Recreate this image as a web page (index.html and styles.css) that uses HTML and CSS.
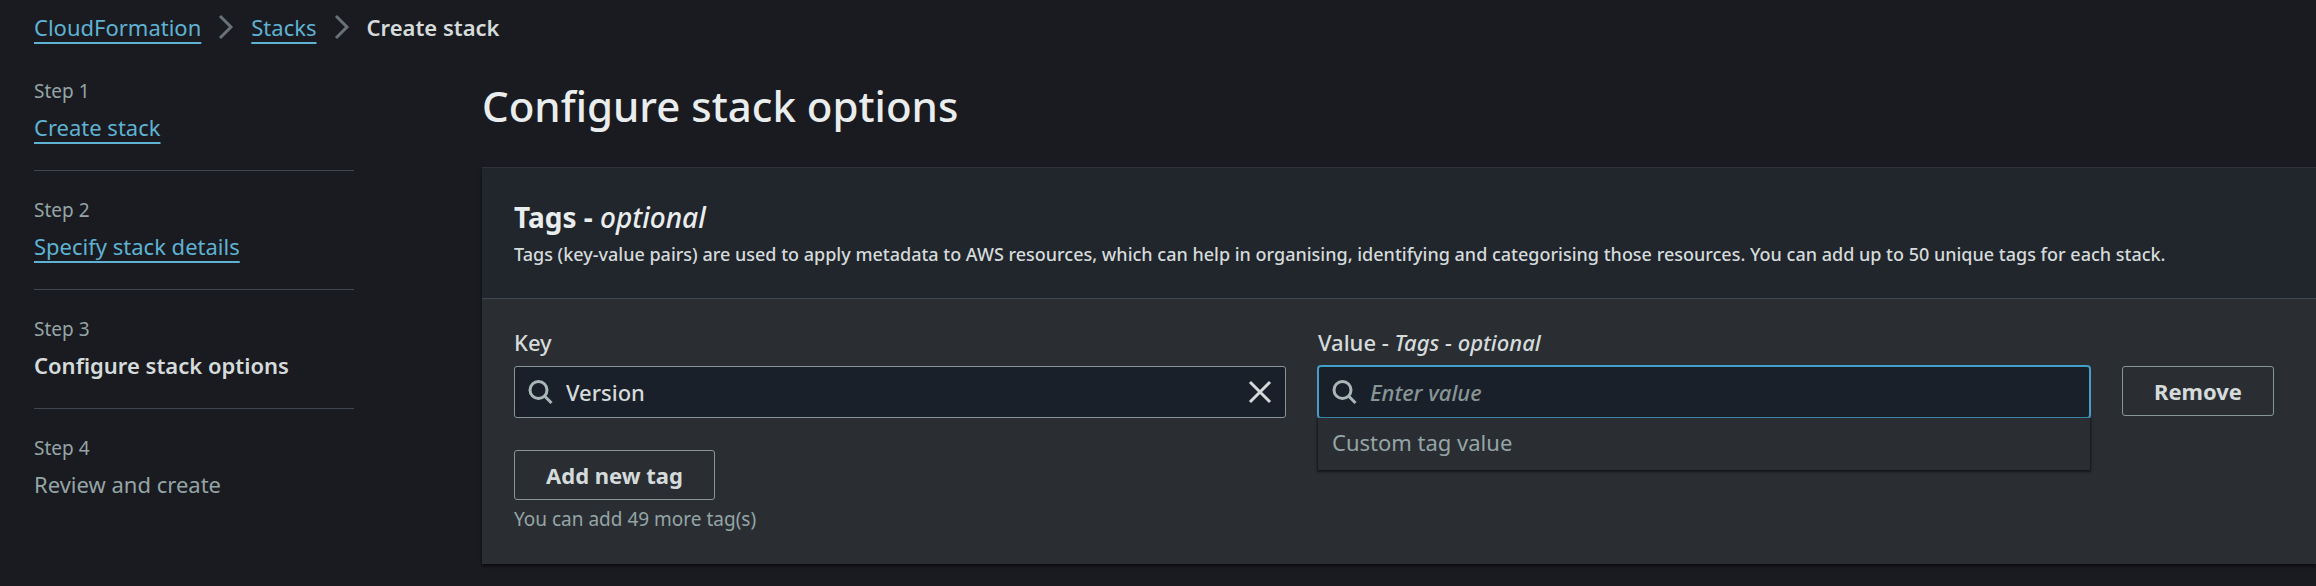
FILE: index.html
```html
<!DOCTYPE html>
<html lang="en">
<head>
<meta charset="utf-8">
<title>Create stack</title>
<link rel="stylesheet" href="styles.css">
</head>
<body>
<nav class="breadcrumbs" aria-label="Breadcrumbs">
  <ol class="crumbs">
    <li class="crumb"><a class="link" href="#cloudformation">CloudFormation</a></li>
    <li class="crumb">
      <svg class="chevron" viewBox="0 0 16 26" aria-hidden="true"><path d="M2 2 13 13 2 24"/></svg>
      <a class="link" href="#stacks">Stacks</a>
    </li>
    <li class="crumb">
      <svg class="chevron" viewBox="0 0 16 26" aria-hidden="true"><path d="M2 2 13 13 2 24"/></svg>
      <span class="crumb-current" aria-current="page">Create stack</span>
    </li>
  </ol>
</nav>
<div class="layout">
  <nav class="steps" aria-label="Steps">
    <ol class="step-list">
      <li class="step"><span class="step-label">Step 1</span><span class="step-title"><a class="link" href="#create">Create stack</a></span></li>
      <li class="step"><span class="step-label">Step 2</span><span class="step-title"><a class="link" href="#details">Specify stack details</a></span></li>
      <li class="step" aria-current="step"><span class="step-label">Step 3</span><span class="step-title step-active">Configure stack options</span></li>
      <li class="step"><span class="step-label">Step 4</span><span class="step-title">Review and create</span></li>
    </ol>
  </nav>
  <main class="main">
    <h1 class="title">Configure stack options</h1>
    <section class="card">
      <header class="card-header">
        <h2 class="card-title">Tags - <i class="optional">optional</i></h2>
        <p class="card-text">Tags (key-value pairs) are used to apply metadata to AWS resources, which can help in organising, identifying and categorising those resources. You can add up to 50 unique tags for each stack.</p>
      </header>
      <form class="card-body">
        <div class="tag-row">
          <div class="field">
            <label class="label" for="key">Key</label>
            <div class="control">
              <svg class="search" viewBox="0 0 26 26" aria-hidden="true"><circle cx="10.5" cy="11" r="8.5"/><path d="m16.5 17 7 7"/></svg>
              <input class="input" id="key" type="text" value="Version">
              <button class="clear" type="button" aria-label="Clear key"><svg class="cross" viewBox="0 0 24 24" aria-hidden="true"><path d="m2 2 20 20M22 2 2 22"/></svg></button>
            </div>
          </div>
          <div class="field">
            <label class="label" for="value">Value - <i>Tags - optional</i></label>
            <div class="control control-focus">
              <svg class="search" viewBox="0 0 26 26" aria-hidden="true"><circle cx="10.5" cy="11" r="8.5"/><path d="m16.5 17 7 7"/></svg>
              <input class="input" id="value" type="text" placeholder="Enter value">
            </div>
            <div class="menu">Custom tag value</div>
          </div>
          <button class="button" type="button">Remove</button>
        </div>
        <button class="button" type="button">Add new tag</button>
        <p class="hint">You can add 49 more tag(s)</p>
      </form>
    </section>
  </main>
</div>
</body>
</html>
```
FILE: styles.css
```css
* { box-sizing: border-box; }

body {
  margin: 0;
  min-height: 100vh;
  overflow-x: hidden;
  background: #1a1b20;
  color: #d5dbdb;
  font: 22px/36px "Noto Sans", "Open Sans", sans-serif;
}

ol, h1, h2, p { margin: 0; padding: 0; list-style: none; }

.link {
  color: #5fb2d3;
  text-decoration: underline 2px;
  text-underline-offset: 6px;
  text-decoration-skip-ink: none;
}

.breadcrumbs { padding: 9px 34px 11px; }
.crumbs, .crumb { display: flex; align-items: center; }
.crumb-current { font-weight: 600; }

.chevron {
  width: 16px;
  height: 26px;
  margin: 0 17px;
  fill: none;
  stroke: #687078;
  stroke-width: 3;
}

.layout {
  display: grid;
  grid-template-columns: 320px minmax(0, 1fr);
  gap: 128px;
  padding-left: 34px;
}

.steps { padding-top: 21px; }

.step {
  display: flex;
  flex-direction: column;
  gap: 4px;
  padding-bottom: 25px;
  color: #95a5a6;
}
.step + .step { padding-top: 25px; border-top: 1px solid #414750; }
.step-label { font-size: 19px; line-height: 28px; }
.step-active { color: #d5dbdb; font-weight: 600; }

.title {
  padding: 20px 0 31px;
  color: #eaeded;
  font-size: 42px;
  line-height: 60px;
  font-weight: 500;
}

.card {
  border-top: 1px solid #2f343a;
  background: #2a2e33;
  box-shadow: 0 2px 3px #0009;
}

.card-header {
  padding: 30px 32px 28px;
  background: #21252c;
  border-bottom: 1px solid #414750;
}
.card-title { padding-bottom: 2px; color: #eaeded; font-size: 28px; line-height: 38px; font-weight: 700; }
.optional { font-weight: 500; }
.card-text { font-size: 18px; line-height: 32px; font-weight: 500; }

.card-body { padding: 25px 42px 29px 32px; }

.tag-row {
  display: grid;
  grid-template-columns: 1fr 1fr auto;
  align-items: end;
  gap: 32px;
  margin-bottom: 32px;
}

.field { position: relative; }
.label { display: block; padding-bottom: 6px; font-weight: 500; }

.control {
  display: flex;
  align-items: center;
  gap: 12px;
  height: 52px;
  padding: 0 13px;
  background: #1a2029;
  border: 1px solid #879596;
  border-radius: 3px;
}
.control-focus { border-color: #44a0c8; box-shadow: 0 0 0 1px #44a0c8; }

.search { width: 26px; height: 26px; fill: none; stroke: #aab7b8; stroke-width: 3; }

.input {
  flex: 1;
  min-width: 0;
  padding: 0;
  border: 0;
  outline: 0;
  background: none;
  color: inherit;
  font: inherit;
  font-weight: 500;
}
.input::placeholder { color: #879596; font-style: italic; opacity: 1; }

.clear { display: flex; padding: 0; border: 0; background: none; }
.cross { width: 24px; height: 24px; fill: none; stroke: #d5dbdb; stroke-width: 3; }

.menu {
  position: absolute;
  top: 100%;
  left: 0;
  right: 0;
  padding: 6px 14px 10px;
  background: #2a2e33;
  color: #95a5a6;
  box-shadow: 0 1px 2px 1px #0008;
}

.button {
  height: 50px;
  padding: 0 31px;
  border: 1px solid #879596;
  border-radius: 3px;
  background: none;
  color: #d5dbdb;
  font: inherit;
  font-weight: 700;
}
.tag-row .button { align-self: start; margin-top: 42px; }

.hint { padding-top: 3px; color: #95a5a6; font-size: 19px; line-height: 32px; }
```
